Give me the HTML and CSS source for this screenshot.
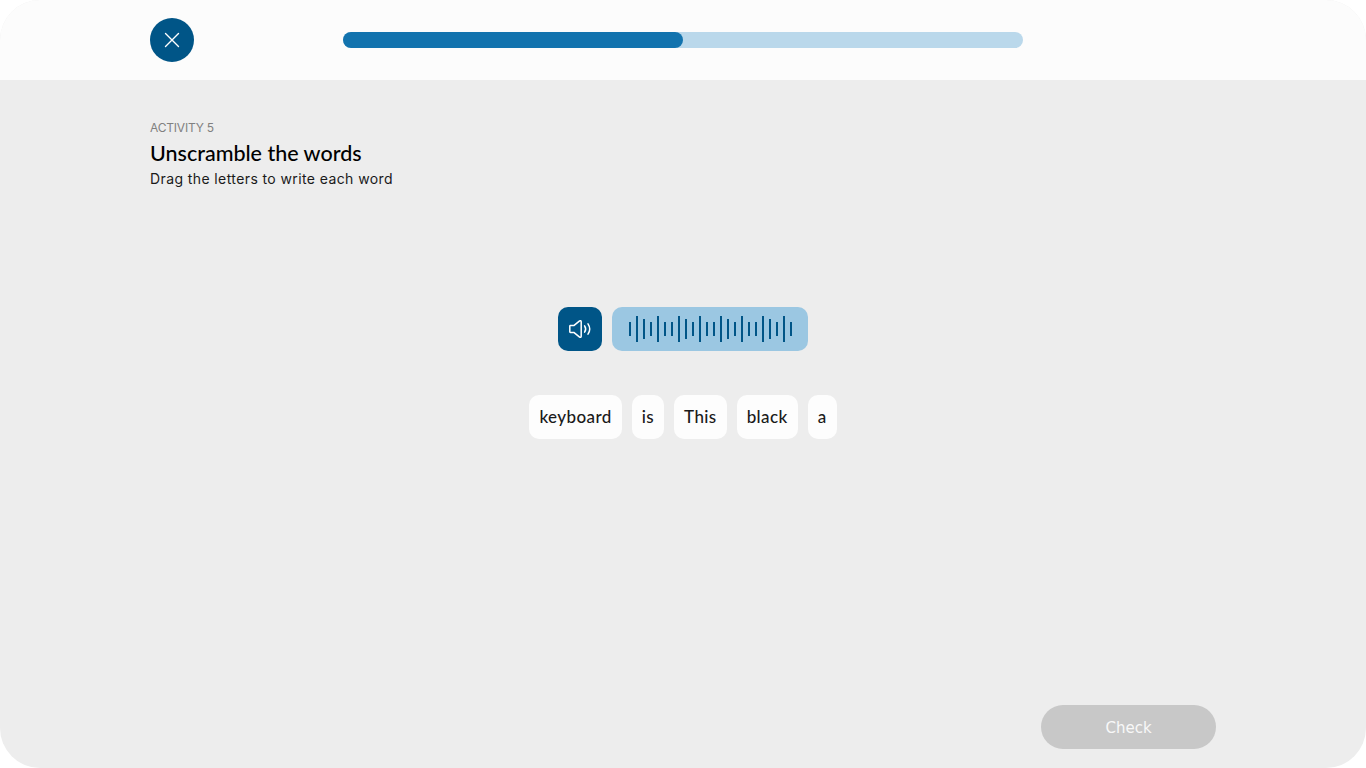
FILE: index.html
```html
<!DOCTYPE html>
<html lang="en">
<head>
    <title>Unscramble the words</title>
    <meta charset="utf-8">
    <link rel="stylesheet" href="styles.css">
</head>
<body>
<div class="shell">
    <header class="topbar">
        <button class="close" type="button" aria-label="Close">
            <svg width="16" height="16" viewBox="0 0 16 16"><path d="M1.5 1.5L14.5 14.5M14.5 1.5L1.5 14.5" stroke="#fff" stroke-width="1.4" stroke-linecap="round"/></svg>
        </button>
        <div class="progress"><div class="progress-fill"></div></div>
    </header>
    <main class="content">
        <div class="kicker">ACTIVITY 5</div>
        <h1 class="title">Unscramble the words</h1>
        <p class="hint">Drag the letters to write each word</p>

        <div class="audio">
            <button class="speaker" type="button" aria-label="Play">
                <svg width="24" height="20" viewBox="0 0 24 20" fill="none" stroke="#fff" stroke-width="1.5" stroke-linecap="round" stroke-linejoin="round"><path d="M2.4 6.6H5.8L11.6 1.9C12.4 1.4 13.2 1.8 13.2 2.7V17.3C13.2 18.2 12.4 18.6 11.6 18.1L5.8 13.4H2.4C2 13.4 1.8 13.1 1.8 12.8V7.2C1.8 6.9 2 6.6 2.4 6.6Z"/><path d="M16.6 6.8C17.8 8.6 17.8 11.4 16.6 13.2"/><path d="M20 4.8C22 7.8 22 12.2 20 15.2"/></svg>
            </button>
            <div class="wave">
                <i class="s"></i><i class="l"></i><i class="m"></i><i class="s"></i><i class="l"></i><i class="s"></i>
                <i class="s"></i><i class="l"></i><i class="m"></i><i class="s"></i><i class="l"></i><i class="s"></i>
                <i class="s"></i><i class="l"></i><i class="m"></i><i class="s"></i><i class="l"></i><i class="s"></i>
                <i class="s"></i><i class="l"></i><i class="m"></i><i class="s"></i><i class="l"></i><i class="s"></i>
            </div>
        </div>

        <div class="words">
            <div class="word">keyboard</div>
            <div class="word">is</div>
            <div class="word">This</div>
            <div class="word">black</div>
            <div class="word">a</div>
        </div>

        <div class="actions">
            <button class="check" type="button">Check</button>
        </div>
    </main>
</div>
</body>
</html>
```

FILE: styles.css
```css
html, body {
    margin: 0;
    background-color: #fff;
}
.shell {
    display: flex;
    flex-direction: column;
    height: 768px;
    border-radius: 40px;
    overflow: hidden;
    background-color: #ededed;
}
.topbar {
    display: flex;
    align-items: center;
    height: 80px;
    padding-left: 150px;
    background-color: #fcfcfc;
}
.close {
    display: flex;
    align-items: center;
    justify-content: center;
    width: 44px;
    height: 44px;
    padding: 0;
    border: 0;
    border-radius: 50%;
    background-color: #005587;
}
.progress {
    width: 680px;
    height: 16px;
    margin-left: 149px;
    border-radius: 8px;
    background-color: #bad8eb;
}
.progress-fill {
    width: 340px;
    height: 16px;
    border-radius: 8px;
    background-color: #1273ae;
}
.content {
    flex: 1;
    display: flex;
    flex-direction: column;
    padding: 40px 150px 19px;
}
.kicker {
    height: 15px;
    font: 12px/15px "Inter", sans-serif;
    letter-spacing: -0.2px;
    color: #808080;
}
.title {
    margin: 5px 0 0;
    font: 500 21.5px/26px "Lato", sans-serif;
    color: #000;
}
.hint {
    margin: 4px 0 0;
    font: 14px/18px "Inter", sans-serif;
    letter-spacing: 0.4px;
    color: #1a1a1a;
}
.audio {
    display: flex;
    justify-content: center;
    gap: 10px;
    margin-top: 119px;
}
.speaker {
    display: flex;
    align-items: center;
    justify-content: center;
    width: 44px;
    height: 44px;
    padding: 0;
    border: 0;
    border-radius: 10px;
    background-color: #005587;
}
.wave {
    display: flex;
    align-items: center;
    justify-content: center;
    gap: 5px;
    width: 196px;
    height: 44px;
    border-radius: 10px;
    background-color: #9bc7e2;
}
.wave i {
    width: 2px;
    background-color: #005587;
}
.wave .s { height: 14px; }
.wave .m { height: 20px; }
.wave .l { height: 26px; }
.words {
    display: flex;
    justify-content: center;
    gap: 10px;
    margin-top: 44px;
}
.word {
    height: 44px;
    padding: 0 10px;
    border-radius: 10px;
    background-color: #fdfdfd;
    font: 500 17px/44px "Lato", sans-serif;
    letter-spacing: 0.4px;
    color: #1a1a1a;
}
.actions {
    display: flex;
    justify-content: flex-end;
    margin-top: auto;
}
.check {
    width: 175px;
    height: 44px;
    padding: 1px 0 0;
    border: 0;
    border-radius: 22px;
    background-color: #c8c8c8;
    font: 15px "DejaVu Sans", sans-serif;
    color: #f8f8f8;
}
```
